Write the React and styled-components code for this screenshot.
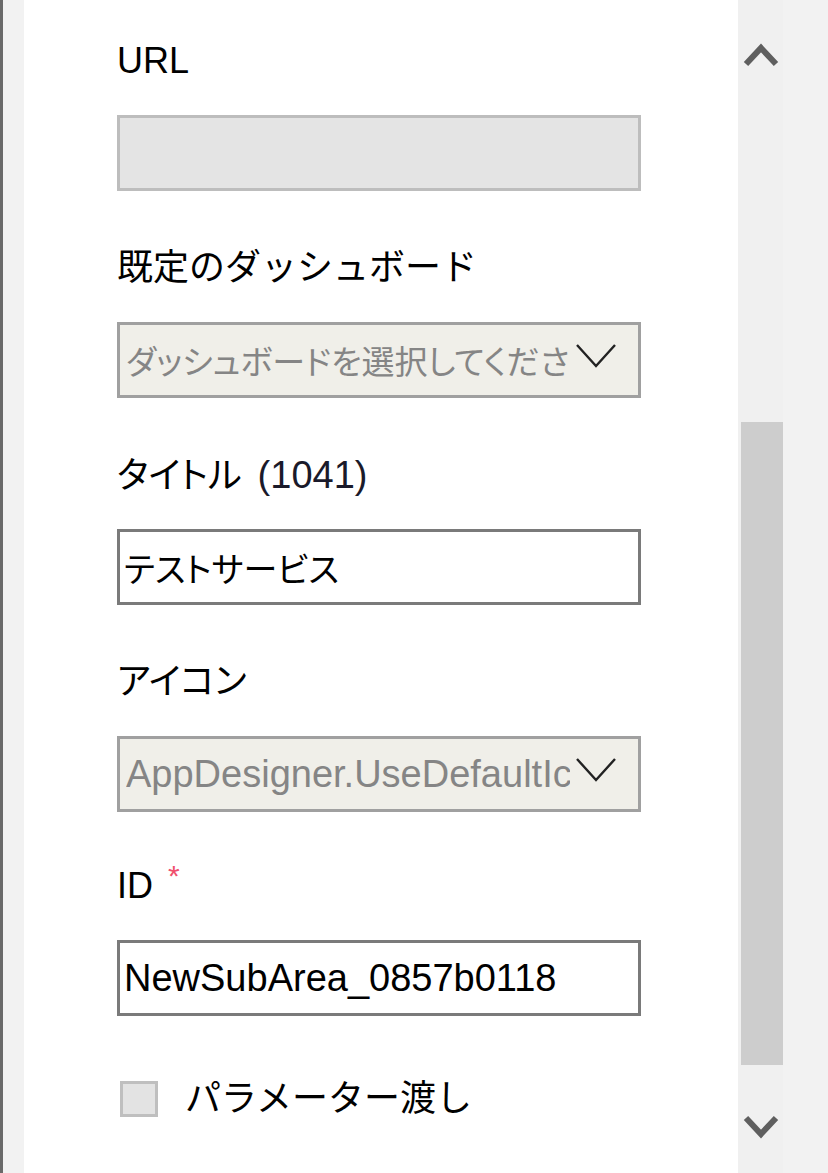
import React from 'react';
import styled, { createGlobalStyle } from 'styled-components';

const GlobalStyle = createGlobalStyle`
  html, body {
    margin: 0;
    padding: 0;
    background: #ffffff;
  }
  body {
    font-family: "Liberation Sans", "Noto Sans CJK JP", sans-serif;
  }
`;

const UpArrow = () => (
  <svg width="36" height="30" viewBox="0 0 36 30">
    <polyline points="3,26 18,10 33,26" fill="none" stroke="#5f5f5f" strokeWidth="6" />
  </svg>
);

const DownArrow = () => (
  <svg width="36" height="30" viewBox="0 0 36 30">
    <polyline points="3,4 18,20 33,4" fill="none" stroke="#5f5f5f" strokeWidth="6" />
  </svg>
);

const Chevron = () => (
  <ChevronIcon width="44" height="30" viewBox="0 0 44 30">
    <polyline points="3,2 22,23 41,2" fill="none" stroke="#222" strokeWidth="2.4" />
  </ChevronIcon>
);

const App = () => {
  return (
    <>
      <GlobalStyle />
      <Page>
        <LeftEdge />
        <LeftGutter />
        <Content>
          <Field>
            <Label>URL</Label>
            <TextBox disabled />
          </Field>
          <Field>
            <Label>既定のダッシュボード</Label>
            <SelectBox>
              <SelectText $size={33}>ダッシュボードを選択してください</SelectText>
              <Chevron />
            </SelectBox>
          </Field>
          <Field>
            <Label $palt>
              タイトル <Counter>(1041)</Counter>
            </Label>
            <TextBox $size={34}>テストサービス</TextBox>
          </Field>
          <Field>
            <Label $palt>アイコン</Label>
            <SelectBox>
              <SelectText>AppDesigner.UseDefaultIcon</SelectText>
              <Chevron />
            </SelectBox>
          </Field>
          <Field $pull>
            <Label>
              ID <Required>*</Required>
            </Label>
            <TextBox>NewSubArea_0857b0118</TextBox>
          </Field>
          <CheckRow>
            <CheckBox />
            <CheckLabel>パラメーター渡し</CheckLabel>
          </CheckRow>
        </Content>
        <ScrollBar>
          <ArrowBox $height={105}>
            <UpArrow />
          </ArrowBox>
          <Track>
            <Thumb />
          </Track>
          <ArrowBox $height={108} $offset={49}>
            <DownArrow />
          </ArrowBox>
        </ScrollBar>
        <RightGutter />
      </Page>
    </>
  );
};

export default App;

const Page = styled.div`
  display: flex;
  width: 828px;
  height: 1173px;
  overflow: hidden;
  background: #ffffff;
`;

const LeftEdge = styled.div`
  width: 3px;
  background: #6a6a6a;
`;

const LeftGutter = styled.div`
  width: 21px;
  background: #f2f2f2;
`;

const Content = styled.div`
  flex: 1;
  display: flex;
  flex-direction: column;
  gap: 55px;
  padding: 39px 0 0 93px;
  font-size: 36px;
  color: #000;
`;

const Field = styled.div`
  display: flex;
  flex-direction: column;
  gap: 32px;
  width: 524px;
  margin-top: ${(p) => (p.$pull ? '-3px' : '0')};
`;

const Label = styled.div`
  height: 44px;
  line-height: 44px;
  white-space: nowrap;
  font-feature-settings: ${(p) => (p.$palt ? '"palt"' : 'normal')};
`;

const Counter = styled.span`
  color: #1a1a2a;
  font-size: 38px;
  margin-left: 6px;
`;

const Required = styled.span`
  color: #f0506e;
  font-size: 30px;
  line-height: 0;
  vertical-align: 12px;
  margin-left: 5px;
`;

const TextBox = styled.div`
  box-sizing: border-box;
  height: 76px;
  display: flex;
  align-items: center;
  padding: 0 4px;
  border: 3px solid ${(p) => (p.disabled ? '#bdbdbd' : '#7a7a7a')};
  background: ${(p) => (p.disabled ? '#e4e4e4' : '#ffffff')};
  white-space: nowrap;
  overflow: hidden;
  font-size: ${(p) => p.$size || 38}px;
  font-feature-settings: "palt";
`;

const SelectBox = styled.div`
  box-sizing: border-box;
  height: 76px;
  display: flex;
  align-items: center;
  padding: 0 20px 0 6px;
  border: 3px solid #a0a0a0;
  background: #f0efe9;
  color: #858585;
`;

const SelectText = styled.div`
  flex: 1;
  white-space: nowrap;
  overflow: hidden;
  margin-right: 4px;
  font-size: ${(p) => p.$size || 38}px;
  font-feature-settings: "palt";
`;

const ChevronIcon = styled.svg`
  flex-shrink: 0;
  margin-bottom: 4px;
`;

const CheckRow = styled.div`
  display: flex;
  align-items: center;
  gap: 27px;
  margin-top: 6px;
  padding-left: 3px;
`;

const CheckBox = styled.div`
  box-sizing: border-box;
  width: 38px;
  height: 36px;
  border: 3px solid #bfbfbf;
  background: #e3e3e3;
`;

const CheckLabel = styled.div`
  line-height: 44px;
`;

const ScrollBar = styled.div`
  width: 45px;
  display: flex;
  flex-direction: column;
  background: #f0f0f0;
`;

const ArrowBox = styled.div`
  height: ${(p) => p.$height}px;
  display: flex;
  align-items: ${(p) => (p.$offset ? 'flex-start' : 'center')};
  padding-top: ${(p) => p.$offset || 0}px;
  box-sizing: border-box;
  justify-content: center;
  flex-shrink: 0;
`;

const Track = styled.div`
  flex: 1;
  display: flex;
  flex-direction: column;
  justify-content: flex-end;
  padding-left: 3px;
`;

const Thumb = styled.div`
  height: 643px;
  background: #cdcdcd;
`;

const RightGutter = styled.div`
  width: 45px;
  background: #f2f2f2;
`;
